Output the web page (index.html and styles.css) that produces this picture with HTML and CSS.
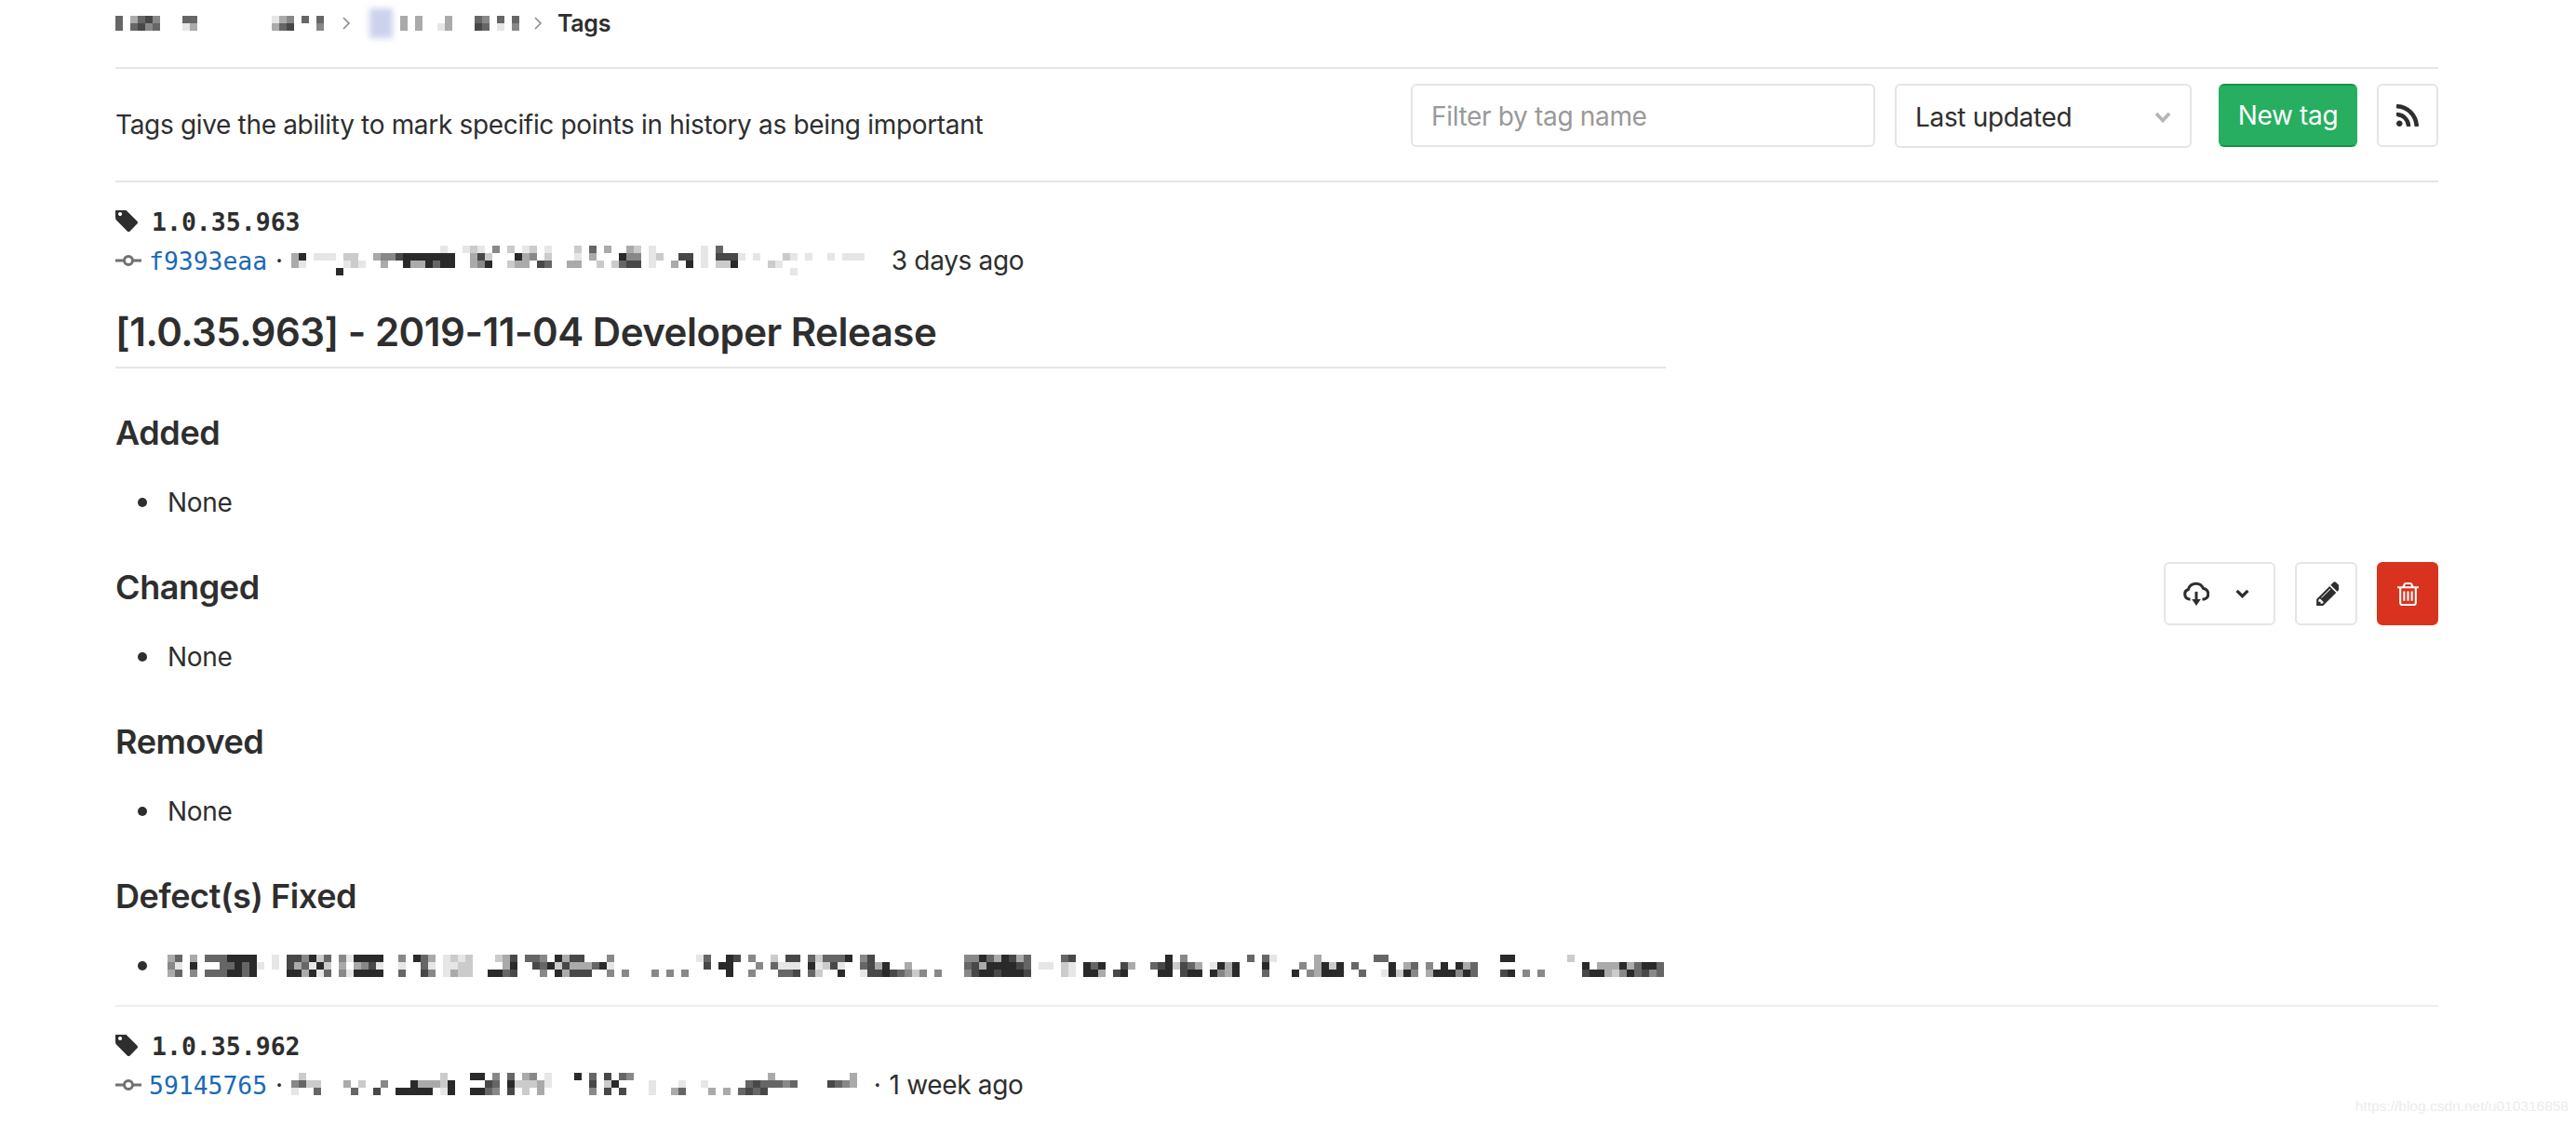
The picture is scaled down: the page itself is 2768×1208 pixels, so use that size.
FILE: index.html
```html
<!DOCTYPE html>
<html lang="en">
<head>
<meta charset="utf-8">
<title>Tags</title>
<link rel="stylesheet" href="styles.css">
</head>
<body>
<div class="page">
  <nav class="crumbs">
    <svg class="mosaic" data-cols="29" data-rows="0:5 2:3564 9:55 21:1 22:34 25:5 27:5|0:5 2:5645 9:13 21:3 22:56 27:4"></svg>
    <svg class="crumb-sep" viewBox="0 0 10 16"><path d="M2 2l6 6-6 6"/></svg>
    <span class="crumb-avatar"></span>
    <svg class="mosaic" data-cols="17" data-rows="0:3 2:3 6:3 10:54 13:5 15:5|0:3 2:3 5:1 6:3 10:65 13:1 15:4"></svg>
    <svg class="crumb-sep crumb-sep-last" viewBox="0 0 10 16"><path d="M2 2l6 6-6 6"/></svg>
    <span class="crumb-current">Tags</span>
  </nav>

  <header class="toolbar">
    <p class="lead">Tags give the ability to mark specific points in history as being important</p>
    <div class="controls">
      <input class="filter" type="text" placeholder="Filter by tag name">
      <button class="sort" type="button">
        <span>Last updated</span>
        <svg class="sort-caret" viewBox="0 0 18 12"><path d="M2 2l7 7.500 7-7.500"/></svg>
      </button>
      <button class="btn btn-green" type="button">New tag</button>
      <button class="btn btn-square" type="button">
        <svg class="icon-rss" viewBox="0 192 1408 1408"><path d="M384 1408q0 80-56 136t-136 56-136-56-56-136 56-136 136-56 136 56 56 136zm512 123q2 28-17 48-18 21-47 21h-135q-25 0-43-16.500t-20-41.500q-22-229-184.500-391.500t-391.500-184.500q-25-2-41.500-20t-16.500-43v-135q0-29 21-47 17-17 43-17h5q160 13 306 80.500t259 181.500q114 113 181.500 259t80.500 306zm512 2q2 27-18 47-18 20-46 20h-143q-26 0-44.500-17.500t-19.500-42.500q-12-215-101-408.500t-231.500-336-336-231.500-408.500-102q-25-1-42.500-19.500t-17.500-43.500v-143q0-28 20-46 18-18 44-18h3q262 13 501.500 120t425.500 294q187 186 294 425.500t120 501.500z"/></svg>
      </button>
    </div>
  </header>

  <section class="release">
    <div class="release-body">
      <div class="tag-line">
        <svg class="icon-tag" viewBox="128 192 1515 1515"><path fill-rule="evenodd" d="M576 448q0-53-37.500-90.500t-90.500-37.500-90.500 37.500-37.500 90.500 37.500 90.500 90.500 37.500 90.500-37.500 37.500-90.500zm1067 576q0 53-37 90l-491 492q-39 37-91 37-53 0-90-37l-715-716q-38-37-64.500-101t-26.500-117v-416q0-52 38-90t90-38h416q53 0 117 26.500t102 64.500l715 714q37 39 37 91z"/></svg>
        <span class="tag-name">1.0.35.963</span>
      </div>
      <div class="commit-line">
        <svg class="icon-commit" viewBox="0 0 28 14"><circle cx="14" cy="7" r="4.5"/><path d="M0 7h9M19 7h9"/></svg>
        <a class="sha" href="#">f9393eaa</a>
        <span class="dot">·</span>
        <svg class="mosaic mosaic-commit" data-cols="78" data-rows="20:1 23:121 27:4 29:2 31:12 34:1 38:2 40:5 42:3 45:32 48:1 55:1 57:5|0:3 1:7 3:11 5:1 7:22 11:344 14:67777777 24:362 30:734 34:2 38:1 40:3 44:744 48:12 52:66 55:1 57:6661 62:1 66:21 69:1 72:1 74:111|0:31 7:121 12:3 15:7 16:33 18:7577 24:347 29:233 33:65 37:33 41:2 43:2566 48:1 51:3 53:7 55:1 57:227 64:21|6:7 67:1"></svg>
        <span class="age">3 days ago</span>
      </div>
      <div class="notes">
        <h2 class="notes-title">[1.0.35.963] - 2019-11-04 Developer Release</h2>
        <h3 class="notes-head">Added</h3>
        <ul class="notes-list"><li>None</li></ul>
        <h3 class="notes-head">Changed</h3>
        <ul class="notes-list"><li>None</li></ul>
        <h3 class="notes-head">Removed</h3>
        <ul class="notes-list"><li>None</li></ul>
        <h3 class="notes-head">Defect(s) Fixed</h3>
        <ul class="notes-list">
          <li><svg class="mosaic" data-cols="201" data-rows="0:35 3:3 5:55577 10:77 14:1 16:6647 20:25 23:41 25:7777 31:4 33:753 37:121 40:2 44:236 48:554 52:7366 59:4 71:15 75:76 78:4 81:2 83:66 86:52 88:5557 93:46 107:447533 112:76 114:35 120:56 134:7 136:4 145:5 147:51 154:3 162:55 179:77 188:2|0:41 3:7 7:557 10:57 12:1 14:1 16:6351 20:72 23:3 25:3461 31:1 34:51 37:112 40:2 45:37 49:6 50:5726333571 72:6 74:77 79:4 81:51 83:11 86:71 88:261 93:563 96:7 99:3 107:563777 112:7765 117:11 120:21 123:757 128:63 132:567 135:2 136:653 140:173 143:7 147:7 152:4 154:3725 157:7 159:5 164:7 166:35 169:4 171:7 173:735 190:7 192:333 195:7357 199:75|0:35 3:4 5:55577 10:57 16:773715 23:41 25:7777 31:5 34:64 37:1321 40:2 43:775 46:6 50:4 52:73666 59:4 61:4 65:4 67:4 69:4 75:7 78:4 82:556 86:52 90:7 93:166 96:76542 101:4 103:4 107:4677677 114:76 120:21 123:773 127:67 133:77 136:677 140:743 143:7 147:5 151:7 153:43777 160:5 163:1727 167:4 169:3777 173:475 179:67 182:4 184:4 190:6773 194:2473 197:5 198:645"></svg></li>
        </ul>
      </div>
    </div>
    <div class="release-actions">
      <button class="btn btn-download" type="button">
        <svg class="icon-cloud" viewBox="0 0 26 26"><path class="cloud-line" d="M7 18.500H6a5 5 0 0 1-1-9.700 8 8 0 0 1 15-1 5.500 5.500 0 0 1 1 10.700h-2"/><path class="cloud-stem" d="M13 11v9"/><path d="M8.500 18.500h9L13 25z"/></svg>
        <svg class="icon-chevron" viewBox="0 0 14 9"><path d="M1.500 1.500L7 7l5.500-5.500"/></svg>
      </button>
      <button class="btn btn-edit" type="button">
        <svg class="icon-pencil" viewBox="0 128 1536 1536"><path fill-rule="evenodd" d="M491 1536l91-91-235-235-91 91v107h128v128h107zm523-928q0-22-22-22-10 0-17 7l-542 542q-7 7-7 17 0 22 22 22 10 0 17-7l542-542q7-7 7-17zm-54-192l416 416-832 832h-416v-416zm683 96q0 53-37 90l-166 166-416-416 166-165q36-38 90-38 53 0 91 38l235 234q37 39 37 91z"/></svg>
      </button>
      <button class="btn btn-square btn-red" type="button">
        <svg class="icon-trash" viewBox="0 128 1408 1536"><path d="M512 736v576q0 14-9 23t-23 9h-64q-14 0-23-9t-9-23v-576q0-14 9-23t23-9h64q14 0 23 9t9 23zm256 0v576q0 14-9 23t-23 9h-64q-14 0-23-9t-9-23v-576q0-14 9-23t23-9h64q14 0 23 9t9 23zm256 0v576q0 14-9 23t-23 9h-64q-14 0-23-9t-9-23v-576q0-14 9-23t23-9h64q14 0 23 9t9 23zm128 724v-948h-896v948q0 22 7 40.500t14.500 27 10.500 8.500h832q3 0 10.500-8.500t14.500-27 7-40.500zm-672-1076h448l-48-117q-7-9-17-11h-317q-10 2-17 11zm928 32v64q0 14-9 23t-23 9h-96v948q0 83-47 143.500t-113 60.500h-832q-66 0-113-58.500t-47-141.500v-952h-96q-14 0-23-9t-9-23v-64q0-14 9-23t23-9h309l70-167q15-37 54-63t79-26h320q40 0 79 26t54 63l70 167h309q14 0 23 9t9 23z"/></svg>
      </button>
    </div>
  </section>

  <section class="release release-last">
    <div class="release-body">
      <div class="tag-line">
        <svg class="icon-tag" viewBox="128 192 1515 1515"><path fill-rule="evenodd" d="M576 448q0-53-37.500-90.500t-90.500-37.500-90.500 37.500-37.500 90.500 37.500 90.500 90.500 37.500 90.500-37.500 37.500-90.500zm1067 576q0 53-37 90l-491 492q-39 37-91 37-53 0-90-37l-715-716q-38-37-64.500-101t-26.500-117v-416q0-52 38-90t90-38h416q53 0 117 26.500t102 64.500l715 714q37 39 37 91z"/></svg>
        <span class="tag-name">1.0.35.962</span>
      </div>
      <div class="commit-line">
        <svg class="icon-commit" viewBox="0 0 28 14"><circle cx="14" cy="7" r="4.5"/><path d="M0 7h9M19 7h9"/></svg>
        <a class="sha" href="#">59145765</a>
        <span class="dot">·</span>
        <svg class="mosaic mosaic-commit-short" data-cols="77" data-rows="1:2 20:2 24:77 27:4 29:5 31:34 34:1 38:7 40:5 42:6 44:54 64:3 75:3|0:452 3:2 7:3 9:2 12:4 16:7333 20:27 26:65 29:72223 34:1 40:6 42:2 43:7 48:1 52:1 55:1 61:5655545 72:6543|0:1 3:5 8:5 11:6 14:77777 20:17 24:7754 29:6 31:2 33:3 40:4 42:6 44:6 48:1 51:35 56:3 58:3 60:5656"></svg>
        <span class="dot dot-after">·</span>
        <span class="age">1 week ago</span>
      </div>
    </div>
  </section>
</div>
<div class="watermark">https://blog.csdn.net/u010316858</div>
<script src="mosaic.js"></script>
</body>
</html>
```

FILE: styles.css
```css
* { box-sizing: border-box; }
html, body { margin: 0; padding: 0; background: #fff; }
body {
  height: 1208px;
  overflow: hidden;
  position: relative;
  font-family: Inter, "Noto Sans", sans-serif;
  font-size: 28px;
  letter-spacing: -0.33px;
  color: #2e2e2e;
}
.page { padding: 0 148px 0 124px; }

.mosaic { display: block; filter: blur(0.4px); flex: none; }
.m1 { fill: #e6e6e6; }
.m2 { fill: #cbcbcb; }
.m3 { fill: #aaaaaa; }
.m4 { fill: #888888; }
.m5 { fill: #666666; }
.m6 { fill: #484848; }
.m7 { fill: #2a2a2a; }

.crumbs {
  height: 74px;
  border-bottom: 2px solid #e5e5e5;
  padding-bottom: 22px;
  display: flex;
  align-items: center;
}
.crumb-sep { width: 10px; height: 16px; margin: 0 12px 0 11px; flex: none; }
.crumb-sep path { fill: none; stroke: #8c8c8c; stroke-width: 1.6; }
.crumb-sep-last { margin: 0 16px 0 7px; }
.crumb-avatar {
  width: 25px;
  height: 32px;
  margin: 0 8px;
  background: #cdd2ec;
  filter: blur(3px);
  flex: none;
}
.crumb-current { font-size: 25px; font-weight: 600; }

.toolbar {
  height: 122px;
  border-bottom: 2px solid #e5e5e5;
  padding-top: 16px;
  display: flex;
  justify-content: space-between;
  align-items: flex-start;
}
.lead { margin: 24px 0 0; font-size: 28px; line-height: 40px; }
.controls { display: flex; gap: 21px; align-items: flex-start; }
.filter {
  width: 499px;
  height: 68px;
  border: 2px solid #e5e5e5;
  border-radius: 6px;
  padding: 2px 20px 0;
  font: inherit;
  letter-spacing: inherit;
  color: #2e2e2e;
  outline: none;
}
.filter::placeholder { color: #999; opacity: 1; }
.sort {
  width: 319px;
  height: 69px;
  border: 2px solid #e5e5e5;
  border-radius: 6px;
  background: #fff;
  padding: 2px 20px 0;
  font: inherit;
  letter-spacing: inherit;
  color: #2e2e2e;
  display: flex;
  align-items: center;
  justify-content: space-between;
}
.sort-caret { width: 18px; height: 12px; flex: none; }
.sort-caret path { fill: none; stroke: #b5b5b5; stroke-width: 3.6; }

.btn {
  height: 68px;
  border: 2px solid #e5e5e5;
  border-radius: 6px;
  background: #fff;
  padding: 0;
  font: inherit;
  letter-spacing: inherit;
  color: #2e2e2e;
  display: flex;
  align-items: center;
  justify-content: center;
  flex: none;
}
.btn-green {
  width: 149px;
  margin-left: 8px;
  background: #27ae60;
  border-color: #1b8f4c;
  border-left-color: #27ae60;
  border-right-color: #27ae60;
  color: #fff;
}
.btn-square { width: 66px; }
.btn-edit { width: 67px; }
.btn-red { background: #d9331f; border-color: #d9331f; }
.btn-download { width: 120px; gap: 28px; padding-right: 8px; }

.icon-rss { width: 24px; height: 24px; fill: #2e2e2e; }
.icon-pencil { width: 26px; height: 26px; fill: #2e2e2e; }
.icon-trash { width: 23px; height: 25px; fill: #fff; }
.icon-cloud { width: 28px; height: 28px; fill: #2e2e2e; }
.cloud-line, .cloud-stem { fill: none; stroke: #2e2e2e; stroke-width: 2.8; }
.icon-chevron { width: 15px; height: 10px; }
.icon-chevron path { fill: none; stroke: #2e2e2e; stroke-width: 3; }

.release {
  height: 886px;
  border-bottom: 2px solid #eee;
  display: flex;
  align-items: center;
  justify-content: space-between;
}
.release-last { height: auto; border-bottom: 0; }
.release-body { width: 1666px; align-self: flex-start; }
.release-actions { display: flex; gap: 21px; }

.tag-line {
  height: 36px;
  margin-top: 24px;
  display: flex;
  align-items: center;
}
.icon-tag { width: 24px; height: 24px; fill: #2e2e2e; margin-right: 15px; flex: none; }
.tag-name {
  font-family: "DejaVu Sans Mono", monospace;
  font-weight: 700;
  font-size: 26.500px;
  letter-spacing: 0;
}
.commit-line {
  height: 44px;
  margin-top: 2px;
  display: flex;
  align-items: center;
  white-space: nowrap;
}
.icon-commit { width: 28px; height: 14px; margin-right: 8px; flex: none; }
.icon-commit circle { fill: none; stroke: #707070; stroke-width: 3; }
.icon-commit path { fill: none; stroke: #707070; stroke-width: 3; }
.sha {
  font-family: "DejaVu Sans Mono", monospace;
  font-size: 26.400px;
  letter-spacing: 0;
  color: #1b69b6;
  text-decoration: none;
}
.dot { margin: 0 9px; }
.dot-after { margin: 0 9px 0 10px; }
.mosaic-commit { margin: 6px 21px 0 0; align-self: flex-start; }
.mosaic-commit-short { margin: 9px 0 0; align-self: flex-start; }

.notes-title {
  margin: 27px 0 0;
  height: 67px;
  border-bottom: 2px solid #e5e5e5;
  font-size: 42px;
  line-height: 56px;
  font-weight: 600;
  letter-spacing: -0.5px;
}
.notes-head {
  margin: 0;
  padding-top: 1px;
  font-size: 36px;
  line-height: 46px;
  font-weight: 600;
  letter-spacing: -0.4px;
}
.notes-title + .notes-head { margin-top: 45px; }
.notes-list {
  margin: 29px 0 44px;
  padding: 0 0 0 56px;
  font-size: 28px;
  line-height: 46px;
  list-style: none;
}
.notes-list li {
  height: 46px;
  display: flex;
  align-items: center;
}
.notes-list li::before {
  content: "";
  width: 10px;
  height: 10px;
  margin: 0 22px 0 -32px;
  border-radius: 50%;
  background: #2e2e2e;
  flex: none;
}

.watermark {
  position: absolute;
  right: 8px;
  bottom: 10px;
  font-family: "Liberation Sans", sans-serif;
  font-size: 15.500px;
  letter-spacing: 0;
  color: #ececec;
}
```

FILE: mosaic.js
```js
document.querySelectorAll('.mosaic').forEach(function (svg) {
  var cell = 8;
  var rows = svg.dataset.rows.split('|');
  var cols = Number(svg.dataset.cols);
  var ns = 'http://www.w3.org/2000/svg';
  svg.setAttribute('width', cols * cell);
  svg.setAttribute('height', rows.length * cell);
  svg.setAttribute('shape-rendering', 'crispEdges');
  rows.forEach(function (row, y) {
    row.split(' ').forEach(function (run) {
      if (!run) return;
      var parts = run.split(':');
      var start = Number(parts[0]);
      parts[1].split('').forEach(function (level, i) {
        var r = document.createElementNS(ns, 'rect');
        r.setAttribute('x', (start + i) * cell);
        r.setAttribute('y', y * cell);
        r.setAttribute('width', cell);
        r.setAttribute('height', cell);
        r.setAttribute('class', 'm' + level);
        svg.appendChild(r);
      });
    });
  });
});
```
